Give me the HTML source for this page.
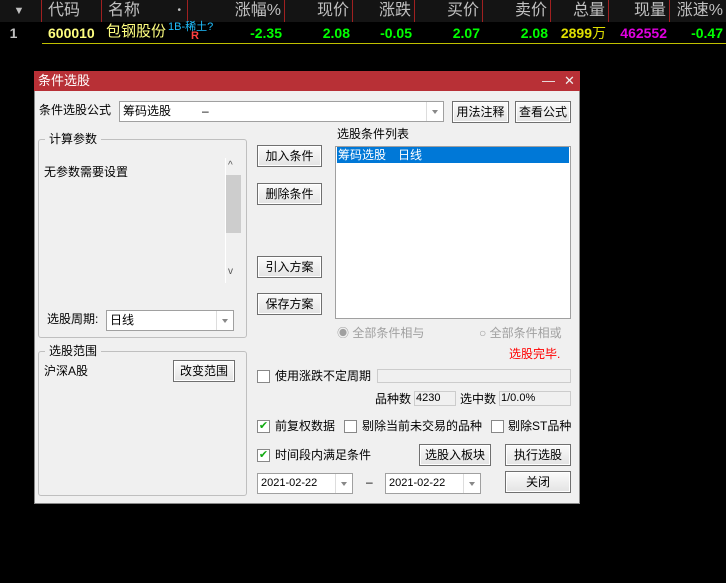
<!DOCTYPE html>
<html><head><meta charset="utf-8"><style>
*{margin:0;padding:0;box-sizing:border-box}
body{width:726px;height:583px;background:#000;position:relative;overflow:hidden;font-family:"Liberation Sans","Noto Sans CJK SC",sans-serif;font-size:12px;color:#000;line-height:1.2}
.a{position:absolute;white-space:nowrap}
.h{position:absolute;top:0;height:22px;color:#c0c0c0;font-size:16px;line-height:22px;text-align:right;border-right:1px solid #a02020;padding-right:3px}
.r{position:absolute;top:24px;height:18px;font-size:14px;font-weight:bold;line-height:18px;text-align:right;padding-right:3px}
.btn{position:absolute;background:linear-gradient(#fbfbfb,#e3e3e3);border:1px solid #707070;box-shadow:inset 0 0 0 1px #fff;text-align:center;font-size:12px;line-height:20px}
.box{position:absolute;background:#fff;border:1px solid #a0a0a0}
.grp{position:absolute;border:1px solid #bfbfbf;border-radius:3px}
.cb{position:absolute;width:13px;height:13px;border:1px solid #888;background:#fff}
.dd{position:absolute;right:0;top:0;bottom:0;width:17px;border-left:1px solid #ddd}
.dd:after{content:"";position:absolute;left:5px;top:8px;border:3px solid transparent;border-top:4px solid #888}
</style></head><body>
<div class="a" style="left:0;top:0;width:726px;height:22px;background:#141414"></div>
<div class="h" style="left:0;width:42px;text-align:center;font-size:11px">▼</div>
<div class="h" style="left:42px;width:60px;text-align:left;padding-left:6px">代码</div>
<div class="h" style="left:102px;width:86px;text-align:left;padding-left:6px">名称<span style="position:absolute;right:6px;font-size:10px">•</span></div>
<div class="h" style="left:188px;width:97px">涨幅%</div>
<div class="h" style="left:285px;width:68px">现价</div>
<div class="h" style="left:353px;width:62px">涨跌</div>
<div class="h" style="left:415px;width:68px">买价</div>
<div class="h" style="left:483px;width:68px">卖价</div>
<div class="h" style="left:551px;width:58px">总量</div>
<div class="h" style="left:609px;width:61px">现量</div>
<div class="h" style="left:670px;width:56px;border:none">涨速%</div>
<div class="r" style="left:0;width:30px;color:#c0c0c0;text-align:center">1</div>
<div class="r" style="left:42px;width:60px;color:#ffff80;text-align:left;padding-left:6px">600010</div>
<div class="a" style="left:106px;top:23px;color:#ffff80;font-size:15px">包钢股份</div>
<div class="a" style="left:168px;top:21px;color:#20c0ff;font-size:11px">1B-稀土?</div>
<div class="a" style="left:191px;top:30px;color:#ff4040;font-size:11px;font-weight:bold">R</div>
<div class="r" style="left:188px;width:97px;color:#00ff00">-2.35</div>
<div class="r" style="left:285px;width:68px;color:#00ff00">2.08</div>
<div class="r" style="left:353px;width:62px;color:#00ff00">-0.05</div>
<div class="r" style="left:415px;width:68px;color:#00ff00">2.07</div>
<div class="r" style="left:483px;width:68px;color:#00ff00">2.08</div>
<div class="r" style="left:551px;width:58px;color:#e0e000">2899<span style="font-weight:normal">万</span></div>
<div class="r" style="left:609px;width:61px;color:#e000e0">462552</div>
<div class="r" style="left:670px;width:56px;color:#00ff00">-0.47</div>
<div class="a" style="left:42px;top:43px;width:684px;height:1px;background:#c0c000"></div>

<div class="a" style="left:34px;top:71px;width:546px;height:433px;background:#f0f0f0;border:1px solid #888"></div>
<div class="a" style="left:34px;top:71px;width:546px;height:20px;background:#b83036;color:#fff;font-size:13px;line-height:20px;padding-left:4px">条件选股<span style="position:absolute;left:508px;color:#eee">—</span><span style="position:absolute;left:530px;color:#eee">✕</span></div>

<div class="a" style="left:39px;top:103px">条件选股公式</div>
<div class="box" style="left:119px;top:101px;width:325px;height:21px;line-height:19px;padding-left:3px">筹码选股<span style="position:absolute;left:82px">–</span><div class="dd"></div></div>
<div class="btn" style="left:452px;top:101px;width:57px;height:22px">用法注释</div>
<div class="btn" style="left:515px;top:101px;width:56px;height:22px">查看公式</div>

<div class="grp" style="left:38px;top:139px;width:209px;height:199px"></div>
<div class="a" style="left:45px;top:132px;background:#f0f0f0;padding:0 4px">计算参数</div>
<div class="a" style="left:44px;top:165px">无参数需要设置</div>
<div class="a" style="left:225px;top:158px;width:16px;height:125px;background:#f0f0f0;border-left:1px solid #fff"></div>
<div class="a" style="left:228px;top:160px;font-size:10px;color:#555">^</div>
<div class="a" style="left:226px;top:175px;width:15px;height:58px;background:#cdcdcd"></div>
<div class="a" style="left:228px;top:266px;font-size:10px;color:#555">v</div>
<div class="a" style="left:47px;top:312px">选股周期:</div>
<div class="box" style="left:106px;top:310px;width:128px;height:21px;line-height:19px;padding-left:3px">日线<div class="dd"></div></div>

<div class="grp" style="left:38px;top:351px;width:209px;height:145px"></div>
<div class="a" style="left:45px;top:344px;background:#f0f0f0;padding:0 4px">选股范围</div>
<div class="a" style="left:44px;top:364px">沪深A股</div>
<div class="btn" style="left:173px;top:360px;width:62px;height:22px">改变范围</div>

<div class="btn" style="left:257px;top:145px;width:65px;height:22px">加入条件</div>
<div class="btn" style="left:257px;top:183px;width:65px;height:22px">删除条件</div>
<div class="btn" style="left:257px;top:256px;width:65px;height:22px">引入方案</div>
<div class="btn" style="left:257px;top:293px;width:65px;height:22px">保存方案</div>

<div class="a" style="left:337px;top:127px">选股条件列表</div>
<div class="box" style="left:335px;top:146px;width:236px;height:173px"></div>
<div class="a" style="left:337px;top:147px;width:232px;height:16px;background:#0078d7;color:#fff;line-height:16px;padding-left:1px">筹码选股　日线</div>

<div class="a" style="left:337px;top:326px;color:#a0a0a0">◉ 全部条件相与</div>
<div class="a" style="left:479px;top:326px;color:#a0a0a0">○ 全部条件相或</div>
<div class="a" style="left:509px;top:347px;color:#ff0000">选股完毕.</div>

<div class="cb" style="left:257px;top:370px"></div>
<div class="a" style="left:275px;top:369px">使用涨跌不定周期</div>
<div class="a" style="left:377px;top:369px;width:194px;height:14px;border:1px solid #ccc;background:#f0f0f0"></div>
<div class="a" style="left:375px;top:392px">品种数</div>
<div class="a" style="left:414px;top:391px;width:42px;height:15px;border:1px solid #ccc;font-size:11px;line-height:13px;padding-left:1px">4230</div>
<div class="a" style="left:460px;top:392px">选中数</div>
<div class="a" style="left:499px;top:391px;width:72px;height:15px;border:1px solid #ccc;font-size:11px;line-height:13px;padding-left:1px">1/0.0%</div>

<div class="cb" style="left:257px;top:420px;color:#1a1;font-size:11px;line-height:11px;text-align:center">✔</div>
<div class="a" style="left:275px;top:419px">前复权数据</div>
<div class="cb" style="left:344px;top:420px"></div>
<div class="a" style="left:362px;top:419px">剔除当前未交易的品种</div>
<div class="cb" style="left:491px;top:420px"></div>
<div class="a" style="left:508px;top:419px">剔除ST品种</div>

<div class="cb" style="left:257px;top:449px;color:#1a1;font-size:11px;line-height:11px;text-align:center">✔</div>
<div class="a" style="left:275px;top:448px">时间段内满足条件</div>
<div class="btn" style="left:419px;top:444px;width:72px;height:22px">选股入板块</div>
<div class="btn" style="left:505px;top:444px;width:66px;height:22px">执行选股</div>

<div class="box" style="left:257px;top:473px;width:96px;height:21px;font-size:11px;line-height:19px;padding-left:3px">2021-02-22<div class="dd"></div></div>
<div class="a" style="left:366px;top:475px">–</div>
<div class="box" style="left:385px;top:473px;width:96px;height:21px;font-size:11px;line-height:19px;padding-left:3px">2021-02-22<div class="dd"></div></div>
<div class="btn" style="left:505px;top:471px;width:66px;height:22px">关闭</div>
</body></html>
